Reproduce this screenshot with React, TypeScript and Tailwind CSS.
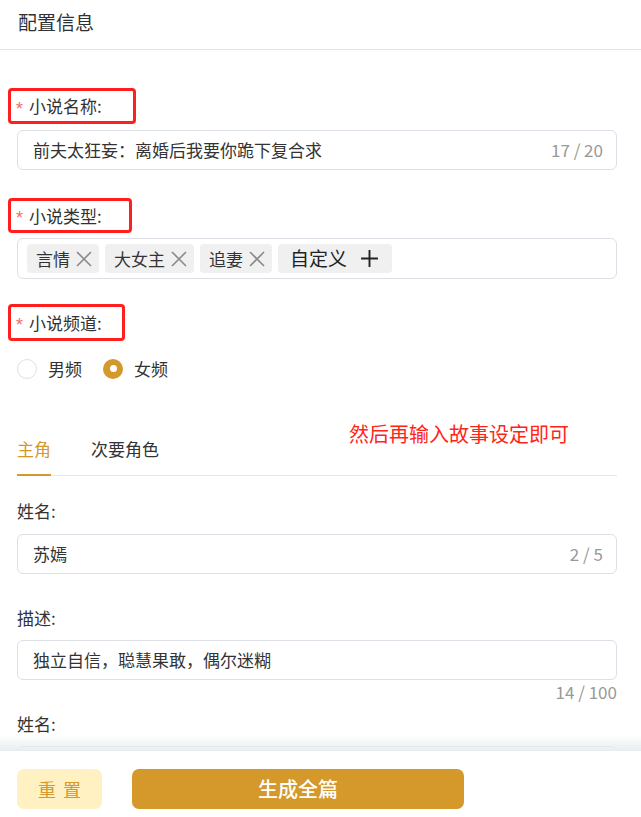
import { useState } from "react";

const GOLD = "#d4982b";

function Label({ text, width, height, required }: { text: string; width?: number; height?: number; required?: boolean }) {
  if (!required) {
    return <div className="text-[17px] leading-[24px] text-[#333]">{text}</div>;
  }
  return (
    <div
      className="-ml-[9px] flex items-center rounded-[4px] border-[3px] border-[#ff1f1f] pl-[5px] text-[17px] text-[#333]"
      style={{ width, height }}
    >
      <span className="mr-[6px] translate-y-[3px] font-['Liberation_Sans',sans-serif] text-[18px] text-[#f56c6c]">*</span>
      <span>{text}</span>
    </div>
  );
}

function CloseIcon() {
  return (
    <svg width="18" height="18" viewBox="0 0 18 18" className="ml-[5px]">
      <path d="M2 2 L16 16 M16 2 L2 16" stroke="#8a8a8a" strokeWidth="1.6" fill="none" />
    </svg>
  );
}

function Tag({ text }: { text: string }) {
  return (
    <div className="flex h-[29px] items-center rounded-[4px] bg-[#f0f0f0] pl-[9px] pr-[6px] text-[17px] text-[#333]">
      <span>{text}</span>
      <CloseIcon />
    </div>
  );
}

function TextInput({ value, count }: { value: string; count: string }) {
  return (
    <div className="flex h-[40px] items-center justify-between rounded-[6px] border border-[#dcdfe6] pl-[15px] pr-[13px]">
      <span className="text-[17px] text-[#333]">{value}</span>
      <span className="text-[17px] text-[#999]">{count}</span>
    </div>
  );
}

function Radio({ checked, label }: { checked?: boolean; label: string }) {
  return (
    <div className="flex items-center">
      {checked ? (
        <span className="flex h-[20px] w-[20px] items-center justify-center rounded-full" style={{ background: GOLD }}>
          <span className="h-[7px] w-[7px] rounded-full bg-white" />
        </span>
      ) : (
        <span className="h-[20px] w-[20px] rounded-full border border-[#dcdfe6] bg-white" />
      )}
      <span className="ml-[11px] text-[17px] text-[#333]">{label}</span>
    </div>
  );
}

export default function App() {
  const [tab] = useState(0);

  return (
    <div className="flex h-[817px] w-full flex-col overflow-hidden bg-white font-['Noto_Sans_CJK_SC',sans-serif]">
      <div className="flex h-[50px] shrink-0 items-center border-b border-[#e4e4e4] px-[18px] pb-[4px] text-[19px] text-[#303133]">
        配置信息
      </div>

      <div className="relative flex-1 overflow-hidden pl-[17px] pr-[24px] pt-[38px]">
        <Label text="小说名称:" width={128} height={36} required />
        <div className="mt-[6px]">
          <TextInput value="前夫太狂妄：离婚后我要你跪下复合求" count="17 / 20" />
        </div>

        <div className="mt-[28px]">
          <Label text="小说类型:" width={124} height={35} required />
        </div>
        <div className="mt-[5px] flex h-[41px] items-center gap-[6px] rounded-[6px] border border-[#dcdfe6] px-[9px]">
          <Tag text="言情" />
          <Tag text="大女主" />
          <Tag text="追妻" />
          <div className="flex h-[29px] items-center rounded-[4px] bg-[#f0f0f0] pl-[12px] pr-[13px] text-[19px] text-[#222]">
            <span>自定义</span>
            <svg width="19" height="19" viewBox="0 0 18 18" className="ml-[13px]">
              <path d="M9 1 V17 M1 9 H17" stroke="#222" strokeWidth="1.8" fill="none" />
            </svg>
          </div>
        </div>

        <div className="mt-[25px]">
          <Label text="小说频道:" width={117} height={37} required />
        </div>
        <div className="mt-[15px] flex items-center gap-[21px]">
          <Radio label="男频" />
          <Radio label="女频" checked />
        </div>

        <div className="relative mt-[55px]">
          <div className="absolute left-[332px] top-[-17px] text-[20px] leading-[28px] text-[#ff2418]">
            然后再输入故事设定即可
          </div>
          <div className="flex gap-[40px] border-b border-[#e4e7ed]">
            {["主角", "次要角色"].map((t, i) => (
              <div
                key={t}
                className={
                  "relative pb-[14px] text-[17px] leading-[24px] " +
                  (i === tab ? "text-[#d4982b]" : "text-[#333]")
                }
              >
                {t}
                {i === tab && <div className="absolute -bottom-[1px] left-0 right-0 h-[2px] bg-[#d4982b]" />}
              </div>
            ))}
          </div>
        </div>

        <div className="mt-[23px]">
          <Label text="姓名:" />
        </div>
        <div className="mt-[11px]">
          <TextInput value="苏嫣" count="2 / 5" />
        </div>

        <div className="mt-[32px]">
          <Label text="描述:" />
        </div>
        <div className="mt-[10px] flex h-[40px] items-center rounded-[6px] border border-[#dcdfe6] pl-[15px] text-[17px] text-[#333]">
          独立自信，聪慧果敢，偶尔迷糊
        </div>
        <div className="mt-[2px] text-right text-[17px] leading-[20px] text-[#999]">14 / 100</div>

        <div className="mt-[10px]">
          <Label text="姓名:" />
        </div>
        <div className="mt-[10px] h-[40px] rounded-[6px] border border-[#dcdfe6]" />
      </div>

      <div className="relative flex h-[67px] shrink-0 items-start gap-[30px] border-t border-[#dcdfe6] bg-white px-[17px] pt-[18px]">
        <div className="pointer-events-none absolute bottom-full left-0 right-0 h-[16px] bg-gradient-to-b from-transparent to-[#e8edef]" />
        <button className="h-[40px] w-[85px] rounded-[7px] bg-[#fff1c2] text-[18px] tracking-[7px] text-[#d4982b]">
          <span className="ml-[7px]">重置</span>
        </button>
        <button className="h-[40px] w-[332px] rounded-[7px] bg-[#d4982b] text-[20px] font-medium text-white">
          生成全篇
        </button>
      </div>
    </div>
  );
}
